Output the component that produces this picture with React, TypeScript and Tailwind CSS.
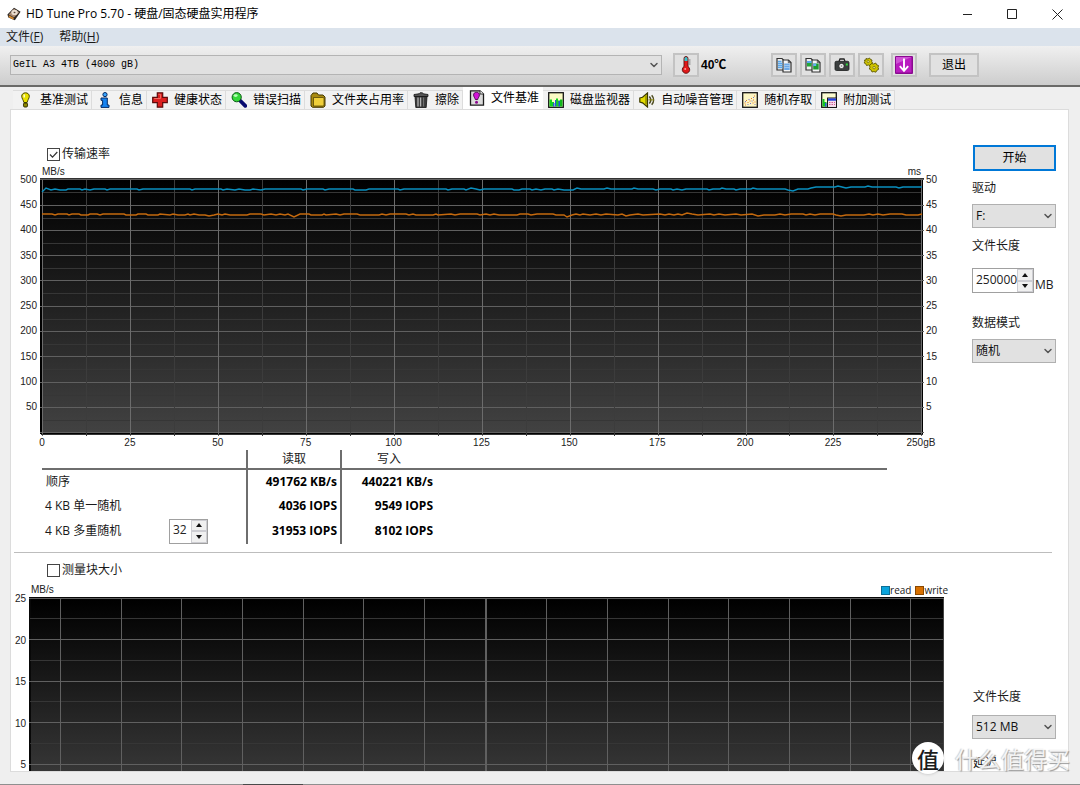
import React, { useState } from "react";
import { ChevronDown } from "lucide-react";

type IconProps = { className?: string };

/* ---------- icons ---------- */

const DriveIcon = () => (
  <svg viewBox="0 0 16 16" className="h-[14px] w-[14px]" aria-hidden="true">
    <path d="M.5 8.500 8 .8 15.500 5.500 9 15 1.500 12Z" fill="#2b2623" />
    <path d="M2 8.500 8 2l6 4-6 6Z" fill="#a98a72" />
    <ellipse cx="8.600" cy="6.200" rx="3.600" ry="3" fill="#e9dccf" />
    <ellipse cx="8.600" cy="6.200" rx="1.100" ry=".9" fill="#5b4638" />
    <path d="m2 9.500 6 3.200-1 1.500-5-2.400Z" fill="#d88a2c" />
  </svg>
);

const BulbIcon = () => (
  <svg viewBox="0 0 16 16" className="h-4 w-4" aria-hidden="true">
    <path d="M7.500.8C5.200.8 3.700 2.400 3.700 4.200c0 2.200 1.800 4 2.200 6.300h3.200c.4-2.300 2.200-4.100 2.200-6.300C11.300 2.400 9.800.8 7.500.8Z" fill="#e8e000" stroke="#4a4800" strokeWidth="1" />
    <path d="M6.200 2.600v3" stroke="#fffde0" strokeWidth="1.400" />
    <rect x="5.500" y="11" width="4" height="4" rx="1.200" fill="#8c8700" stroke="#2e2d00" />
  </svg>
);

const InfoIcon = () => (
  <svg viewBox="0 0 16 16" className="h-4 w-4" aria-hidden="true">
    <circle cx="8" cy="2.600" r="2.100" fill="#38a5ff" stroke="#052a66" strokeWidth="1" />
    <path d="M4 6h6.300v7H12v2.400H4V13h1.600V8.300H4Z" fill="#1784f2" stroke="#052a66" strokeWidth="1" />
  </svg>
);

const CrossIcon = () => (
  <svg viewBox="0 0 16 16" className="h-4 w-4" aria-hidden="true">
    <path d="M5.300.8h5.400v4.500h4.600v5.400h-4.600v4.500H5.300v-4.500H.7V5.300h4.600Z" fill="#dc2020" stroke="#5c0c0c" strokeWidth="1.200" />
    <path d="M6.500 2.300h2v4.200H2.200" fill="none" stroke="#f06a60" strokeWidth="1" />
  </svg>
);

const SearchIcon = () => (
  <svg viewBox="0 0 16 16" className="h-4 w-4" aria-hidden="true">
    <path d="m9 8.500 5.300 5.300" stroke="#080a70" strokeWidth="3.800" strokeLinecap="round" />
    <circle cx="5.700" cy="5.200" r="4.600" fill="#35d83a" stroke="#0e5a18" strokeWidth="1" />
    <ellipse cx="4.600" cy="3.600" rx="2" ry="1.400" fill="#b8ffb8" />
  </svg>
);

const FolderIcon = () => (
  <svg viewBox="0 0 16 16" className="h-4 w-4" aria-hidden="true">
    <path d="M1 3.500 3 1h4l1.500 2H13l2 2v9l-1.500 1.300H2.500L1 14Z" fill="#a88a10" stroke="#463900" strokeWidth="1" />
    <path d="M3.500 5.500H13a1 1 0 0 1 1 1V13a1 1 0 0 1-1 1H3.500Z" fill="#f0cf3a" stroke="#463900" strokeWidth=".7" />
  </svg>
);

const TrashIcon = () => (
  <svg viewBox="0 0 16 16" className="h-4 w-4" aria-hidden="true">
    <path d="M2 4.500h12l-.8 11H2.800Z" fill="#3a3a3a" stroke="#111" strokeWidth=".8" />
    <path d="M5 5.500v9M7.600 5.500v9" stroke="#b5b5b5" strokeWidth="1.300" />
    <path d="M10.600 5.500v9" stroke="#777" strokeWidth="1" />
    <path d="M1 4.500v-2L6 1.800 7 .8h2.500l.8 1 4.700.7v2Z" fill="#555" stroke="#111" strokeWidth=".8" />
  </svg>
);

const FileBenchIcon = () => (
  <svg viewBox="0 0 16 16" className="h-4 w-4" aria-hidden="true">
    <path d="M1.500.8H11L14.500 4v11.200h-13Z" fill="#dcdcdc" stroke="#1c1c1c" strokeWidth="1.300" />
    <path d="M11 .8V4h3.500" fill="#fff" stroke="#1c1c1c" strokeWidth=".9" />
    <path d="M7.500 2.300c-1.900 0-2.900 1.100-2.900 2.700 0 1.700 1.300 2.700 1.700 4.500h2.400c.4-1.800 1.700-2.800 1.700-4.500 0-1.600-1-2.700-2.900-2.700Z" fill="#d414d8" stroke="#4a064c" strokeWidth=".9" />
    <circle cx="7.500" cy="12.200" r="1.500" fill="#8d0c90" />
  </svg>
);

const MonitorIcon = () => (
  <svg viewBox="0 0 16 16" className="h-4 w-4" aria-hidden="true">
    <rect x=".7" y=".7" width="14.600" height="14.600" fill="#fbfbc4" stroke="#161616" strokeWidth="1.300" />
    <path d="M1.500 14.500V7.500H4V10h2v4.500ZM8 14.500V6.500h2v2h2v6Z" fill="#12d41e" />
    <path d="M5 14.500V11h1.500v3.500ZM7 14.500V8h1.200v6.500ZM10.500 14.500V9H12v5.500Z" fill="#2456d8" />
    <path d="M12 14.500V7.500h2.500v7Z" fill="#12b81c" />
  </svg>
);

const SpeakerIcon = () => (
  <svg viewBox="0 0 16 16" className="h-4 w-4" aria-hidden="true">
    <path d="M.8 6 3.500 5.300 8.500 1v14L3.500 10.800.8 10Z" fill="#e3dc00" stroke="#3b3900" strokeWidth="1.200" />
    <path d="M7 3.500v9" stroke="#8c8800" strokeWidth="1.400" />
    <path d="M10.300 4.500c1.700 2 1.700 5 0 7M12.700 3.300c2.500 2.800 2.500 6.600 0 9.400" fill="none" stroke="#4d4b20" strokeWidth="1.500" />
    <path d="M9.500 7.900h5.500" stroke="#8c8800" strokeWidth="1" />
  </svg>
);

const RandomIcon = () => (
  <svg viewBox="0 0 16 16" className="h-4 w-4" aria-hidden="true">
    <rect x=".7" y=".7" width="14.600" height="14.600" fill="#fdf6c4" stroke="#161616" strokeWidth="1.300" />
    <path d="M2.500 11h1M4 8.500h1M5.500 10.500h1M7.500 9h1M9 6.500h1M11 8h1M12 4h1M10.500 11h1M3 13h1M12.500 10h1" stroke="#e0762c" strokeWidth="1.200" />
    <path d="M3 9.500h1M5.500 12.500h1M8 11.500h1M9.500 9h1M11 5.500h1M6.500 7.500h1M12.500 12.500h1" stroke="#7a73c8" strokeWidth="1.100" />
  </svg>
);

const ExtraIcon = () => (
  <svg viewBox="0 0 16 16" className="h-4 w-4" aria-hidden="true">
    <rect x=".7" y=".7" width="14.600" height="14.600" fill="#fbfbd0" stroke="#161616" strokeWidth="1.300" />
    <path d="M1.500 14.500V7h2v3h2v4.500Z" fill="#12c41e" />
    <path d="M4 14.500V11h1.500v3.500Z" fill="#2456d8" />
    <rect x="6.500" y="6" width="9" height="9.500" fill="#f3dcea" stroke="#161616" />
    <rect x="7" y="6.500" width="8" height="2.200" fill="#1c3fe0" />
    <path d="M8 10.500h6M8 12.500h6" stroke="#d05a9a" strokeWidth="1" strokeDasharray="1.500 1" />
  </svg>
);

const ThermometerIcon = () => (
  <svg viewBox="0 0 16 18" className="h-[18px] w-4" aria-hidden="true">
    <path d="M6 2.500a2 2 0 0 1 4 0v8a3.700 3.700 0 1 1-4 0Z" fill="#e01818" stroke="#5a1010" strokeWidth=".9" />
    <path d="M6.500 5V2.500a1.500 1.500 0 0 1 3 0V5Z" fill="#35c6cf" />
    <path d="M10.800 4h1.700M10.800 6h1.700M10.800 8h1.700" stroke="#555" strokeWidth=".8" />
    <circle cx="7.200" cy="13" r="1" fill="#ff9c9c" />
  </svg>
);

const PagesIcon = ({ image }: { image?: boolean }) => (
  <svg viewBox="0 0 16 16" className="h-4 w-4" aria-hidden="true">
    <path d="M1 1.500h5L8 3.500V13H1Z" fill="#eee" stroke="#333" strokeWidth="1.200" />
    <path d="M7 3h5.500L15 5.500V15H7Z" fill="#f4f4f4" stroke="#333" strokeWidth="1.200" />
    <path d="M12.300 3v2.700H15" fill="none" stroke="#333" strokeWidth=".8" />
    {image ? (
      <>
        <rect x="2" y="4" width="4.500" height="5.500" fill="#23a836" />
        <rect x="2" y="4" width="4.500" height="2" fill="#57a6ef" />
        <rect x="8.200" y="6.500" width="5.500" height="6" fill="#1c9c2e" />
        <rect x="8.200" y="6.500" width="3" height="2.500" fill="#62aef2" />
      </>
    ) : (
      <>
        <path d="M2 4.500h3.500M2 6.500h4.500M2 8.500h4.500M2 10.500h4.500" stroke="#5aa7ea" strokeWidth="1.300" />
        <rect x="8.200" y="6.500" width="5.500" height="6.500" fill="#6ba8e6" />
        <path d="M8.200 8.500h5.500M8.200 10.500h5.500" stroke="#b4d5f5" strokeWidth=".7" />
      </>
    )}
  </svg>
);

const CameraIcon = () => (
  <svg viewBox="0 0 16 16" className="h-4 w-4" aria-hidden="true">
    <path d="M5 4.500 6 2h4l1 2.500" fill="#eee" stroke="#222" strokeWidth="1.300" />
    <rect x="1" y="4.300" width="14" height="9.200" rx="1.400" fill="#3b3f3f" stroke="#1b1d1d" strokeWidth=".8" />
    <circle cx="7.500" cy="9" r="2.600" fill="#f2f2f2" stroke="#111" strokeWidth=".6" />
    <circle cx="7.500" cy="9" r=".9" fill="#999" />
    <rect x="11.800" y="6.500" width="2" height="2" fill="#2edb3c" />
  </svg>
);

const GearsIcon = () => (
  <svg viewBox="0 0 16 16" className="h-4 w-4" aria-hidden="true">
    <g fill="#cfc400" stroke="#5d5800" strokeWidth=".9">
      <path d="M3 1.500 5 2l1.500-1 1 1.500 1.500.5-.3 1.600.8 1.400-1.500 1L7 8.500 5.300 8 3.500 8.500l-.7-1.700L1.200 6l.6-1.500L1.500 3l1.500 0Z" />
      <path d="M8.700 6.500 10.700 7l2-1 1 1.800 1.900.8-.6 1.800.7 1.900-1.800 1-1 1.900-2-.7-1.900.5-.7-1.800L6.300 12l.7-1.800-.5-1.800Z" />
    </g>
    <circle cx="5.200" cy="4.600" r="1.100" fill="#eee88a" stroke="#5d5800" strokeWidth=".6" />
    <circle cx="11.100" cy="10.600" r="1.200" fill="#eee88a" stroke="#5d5800" strokeWidth=".6" />
  </svg>
);

const DownIcon = () => (
  <svg viewBox="0 0 18 18" className="h-[18px] w-[18px]" aria-hidden="true">
    <rect width="18" height="18" rx="1" fill="#8a0a90" />
    <rect x="1" y="1" width="15.500" height="15.500" fill="#b91cc0" />
    <path d="M1 1h15.500L1 8Z" fill="#cf52d6" />
    <path d="M9 2.500V14M4.800 10.200 9 14.800l4.200-4.600" fill="none" stroke="#fff" strokeWidth="1.900" />
  </svg>
);

/* ---------- controls ---------- */

function ToolButton({ label, children }: { label: string; children: React.ReactNode }) {
  return (
    <button
      type="button"
      aria-label={label}
      className="flex h-6 w-[26px] items-center justify-center border-2 border-[#c3c3c3] bg-[#e1e1e1]"
    >
      {children}
    </button>
  );
}

function SelectBox({ id, options }: { id: string; options: string[] }) {
  return (
    <div className="relative">
      <select
        id={id}
        className="block h-6 w-full appearance-none border border-[#b0b0b0] bg-[#e1e1e1] pl-[3px] pr-5 text-xs text-[#111]"
      >
        {options.map((o) => (
          <option key={o}>{o}</option>
        ))}
      </select>
      <ChevronDown className="pointer-events-none absolute right-[2px] top-[6px] h-3 w-3 text-[#555]" strokeWidth={3} />
    </div>
  );
}

function Spinner({ id, initial, width }: { id: string; initial: number; width: string }) {
  const [value, setValue] = useState(initial);
  return (
    <div className={`flex h-[25px] border border-[#a0a0a0] bg-white ${width}`}>
      <input
        id={id}
        value={value}
        onChange={(e) => setValue(Number(e.target.value) || 0)}
        className="w-0 flex-1 bg-white pb-[2px] pl-[3px] text-xs text-[#222] outline-none"
      />
      <div className="flex w-4 flex-col gap-[2px] bg-[#cdcdd2] p-px">
        <button type="button" aria-label="+" onClick={() => setValue(value + 1)} className="flex flex-1 items-center justify-center bg-[#f0f0f0]">
          <svg viewBox="0 0 6 4" className="h-1 w-[6px]"><path d="M0 4 3 0l3 4Z" fill="#111" /></svg>
        </button>
        <button type="button" aria-label="-" onClick={() => setValue(value - 1)} className="flex flex-1 items-center justify-center bg-[#f0f0f0]">
          <svg viewBox="0 0 6 4" className="h-1 w-[6px]"><path d="M0 0h6L3 4Z" fill="#111" /></svg>
        </button>
      </div>
    </div>
  );
}

function CheckField({ id, label, checked }: { id: string; label: string; checked: boolean }) {
  const [on, setOn] = useState(checked);
  return (
    <div className="flex h-[14px] items-center gap-[2px] pl-9">
      <div className="relative h-[13px] w-[13px]">
        <input
          id={id}
          type="checkbox"
          checked={on}
          onChange={() => setOn(!on)}
          className="block h-[13px] w-[13px] appearance-none border border-[#444] bg-white"
        />
        {on && (
          <svg viewBox="0 0 13 13" className="pointer-events-none absolute inset-0 h-[13px] w-[13px]">
            <path d="m3 6.500 2.500 2.700L10.300 4" fill="none" stroke="#333" strokeWidth="1.200" />
          </svg>
        )}
      </div>
      <label htmlFor={id} className="leading-[14px]">{label}</label>
    </div>
  );
}

/* ---------- charts ---------- */

const READ: number[][] = [
  [2, 3], [6, -1], [11, 1], [15, 0], [20, 1], [26, 1], [28, 0], [40, 0], [42, 1], [45, 0], [50, 1], [54, 0], [65, 0], [67, 1], [70, 0],
  [97, 0], [99, 1], [103, 0], [150, 0], [152, 1], [155, 0], [181, 0], [183, 1], [187, 0], [195, 1], [199, 0], [205, 1], [210, 1], [213, 0],
  [221, 1], [225, 0], [261, 0], [263, 1], [267, 0], [283, 0], [285, 1], [289, 0], [313, 0], [315, 1], [326, 1], [329, 0], [358, 0],
  [360, 1], [364, 0], [406, 0], [408, 1], [412, 0], [424, 0], [426, 1], [431, -1], [436, 0], [440, 1], [444, 0], [472, 0], [474, 1],
  [479, 1], [482, 0], [490, 0], [492, 1], [496, 0], [501, 1], [505, 0], [512, 0], [514, 1], [518, 0], [524, 1], [533, 1], [537, -1],
  [541, 0], [564, 0], [567, -1], [571, 0], [592, 0], [594, -1], [598, 0], [613, 0], [616, 1], [620, 0], [631, 0], [633, 1], [637, 0],
  [642, 1], [646, 0], [667, 0], [669, 1], [673, 0], [680, 0], [682, -1], [686, 0], [694, 0], [696, 1], [700, 0], [711, 0], [713, -1],
  [717, 0], [745, 0], [748, 1], [753, 2], [758, 0], [768, 0], [771, -1], [776, -2], [795, -2], [798, -3], [802, -2], [806, -1],
  [811, -2], [825, -2], [828, -3], [832, -2], [856, -2], [859, -1], [863, -2], [882, -2],
];

const WRITE: number[][] = [
  [2, 0], [12, 0], [15, 1], [18, 0], [27, 0], [29, 1], [32, 0], [39, 0], [41, 1], [48, 1], [50, 0], [57, 0], [60, 1], [63, 0], [84, 0],
  [86, 1], [96, 1], [98, 0], [106, 0], [108, 1], [118, 1], [120, 0], [130, 1], [133, 0], [138, 1], [145, 1], [148, 0], [150, 1], [154, 0],
  [159, 1], [165, 1], [169, 2], [174, 1], [178, 0], [182, 1], [185, 0], [190, 1], [207, 1], [210, 0], [221, 0], [224, 1], [231, 0],
  [236, 1], [240, 0], [245, 1], [248, 0], [254, 3], [260, 0], [269, 0], [271, 1], [282, 1], [284, 0], [286, 1], [296, 0], [300, 1],
  [304, 0], [317, 0], [320, 1], [339, 1], [342, 0], [346, 1], [350, 0], [366, 0], [369, 1], [373, 0], [376, 1], [393, 1], [396, 0],
  [398, 1], [411, 0], [415, 1], [420, 0], [437, 0], [440, 1], [446, 0], [450, 1], [454, 0], [459, 1], [477, 1], [480, 0], [488, 0],
  [491, 1], [497, 0], [513, 0], [516, 1], [524, 1], [527, 3], [532, 1], [536, 0], [540, 1], [543, 0], [550, 1], [556, 0], [561, 1],
  [566, 0], [578, 1], [582, 0], [586, 2], [590, 1], [598, 0], [603, 1], [620, 0], [625, 1], [629, 0], [634, 1], [638, 0], [642, 1],
  [647, -1], [652, 0], [658, 1], [670, 0], [674, 1], [679, 0], [685, 1], [696, 0], [701, 1], [712, 0], [718, 2], [724, 1], [735, 1],
  [740, 0], [745, 1], [751, 0], [763, 0], [766, 1], [770, 0], [775, 1], [780, 0], [793, 0], [796, 1], [801, 2], [806, 1], [824, 1],
  [829, 0], [833, 1], [838, 0], [843, 1], [850, 0], [862, 0], [866, 1], [878, 1], [882, 0],
];

const toPoints = (series: number[][], base: number) => series.map(([x, d]) => `${x},${base + d}`).join(" ");
const range = (n: number) => Array.from({ length: n }, (_, i) => i);

function TransferChart() {
  return (
    <svg viewBox="0 0 884 258" preserveAspectRatio="none" className="block h-[258px] w-full" shapeRendering="crispEdges" aria-hidden="true">
      <defs>
        <linearGradient id="transferPlot" x1="0" y1="0" x2="0" y2="1">
          <stop offset="0" stopColor="#000" />
          <stop offset="1" stopColor="#424242" />
        </linearGradient>
      </defs>
      <rect x="0" y="0" width="883" height="256" fill="#000" />
      <rect x="3" y="2" width="879" height="253" fill="url(#transferPlot)" />
      <path d="M0 .5H884" stroke="#333" />
      {range(10).map((i) => (
        <path key={i} d={`M2 ${Math.round(14.2 + 25.3 * i) + 0.5}H882`} stroke="#363636" />
      ))}
      {range(11).map((i) => (
        <path key={i} d={`M0 ${Math.floor(1.7 + 25.3 * i) + 0.5}H884`} stroke="#606060" />
      ))}
      {range(21).map((i) => (
        <path key={i} d={`M${Math.floor(2.5 + 43.97 * i) + 0.5} 2V258`} stroke={i % 2 ? "#3c3c3c" : "#6c6c6c"} />
      ))}
      <path d="M1 256.500H883" stroke="#333" />
      <g fill="none" strokeWidth="1.400" shapeRendering="auto">
        <polyline points={toPoints(READ, 11)} stroke="#0a8fbe" />
        <polyline points={toPoints(WRITE, 36)} stroke="#c4690e" />
      </g>
    </svg>
  );
}

function BlockChart() {
  return (
    <svg viewBox="0 0 914 174" preserveAspectRatio="none" className="block h-[174px] w-full" shapeRendering="crispEdges" aria-hidden="true">
      <defs>
        <linearGradient id="blockPlot" x1="0" y1="0" x2="0" y2="1">
          <stop offset="0" stopColor="#000" />
          <stop offset="1" stopColor="#363636" />
        </linearGradient>
      </defs>
      <rect width="914" height="174" fill="#080808" />
      <rect x="2" y="2" width="911" height="172" fill="url(#blockPlot)" />
      {range(4).map((i) => (
        <path key={i} d={`M1 ${Math.floor(21.5 + 41.5 * i) + 0.5}H914`} stroke="#363636" />
      ))}
      {range(5).map((i) => (
        <path key={i} d={`M0 ${Math.floor(1 + 41.5 * i) + 0.5}H914`} stroke="#606060" />
      ))}
      {range(15).map((i) => (
        <path key={i} d={`M${Math.floor(31.5 + 60.67 * i) + 0.5} 2V174`} stroke="#606060" />
      ))}
      <path d="M913.500 2V174" stroke="#444" />
    </svg>
  );
}

/* ---------- page ---------- */

const TABS: { label: string; Icon: React.FC<IconProps>; active?: boolean }[] = [
  { label: "基准测试", Icon: BulbIcon },
  { label: "信息", Icon: InfoIcon },
  { label: "健康状态", Icon: CrossIcon },
  { label: "错误扫描", Icon: SearchIcon },
  { label: "文件夹占用率", Icon: FolderIcon },
  { label: "擦除", Icon: TrashIcon },
  { label: "文件基准", Icon: FileBenchIcon, active: true },
  { label: "磁盘监视器", Icon: MonitorIcon },
  { label: "自动噪音管理", Icon: SpeakerIcon },
  { label: "随机存取", Icon: RandomIcon },
  { label: "附加测试", Icon: ExtraIcon },
];

const RATES = [500, 450, 400, 350, 300, 250, 200, 150, 100, 50];
const DELAYS = [50, 45, 40, 35, 30, 25, 20, 15, 10, 5];
const SIZES = ["0", "25", "50", "75", "100", "125", "150", "175", "200", "225", "250gB"];
const BLOCK_RATES = [25, 20, 15, 10, 5];

const CHART_TEXT = "font-['Liberation_Sans',sans-serif] text-[10px] leading-3 text-[#222]";

export default function App() {
  return (
    <div className="flex min-h-screen flex-col bg-[#efefef] font-['Open_Sans','Noto_Sans_CJK_SC',sans-serif] text-xs text-[#1a1a1a]">
      <header className="flex h-7 items-center bg-white pl-[7px]">
        <DriveIcon />
        <h1 className="flex-1 pl-[5px] text-xs leading-4 text-black">HD Tune Pro 5.70 - 硬盘/固态硬盘实用程序</h1>
        <button type="button" aria-label="最小化" className="flex h-7 w-[45px] items-center justify-center">
          <svg viewBox="0 0 11 11" className="h-[11px] w-[11px]"><path d="M1 5.500h9" stroke="#222" /></svg>
        </button>
        <button type="button" aria-label="最大化" className="flex h-7 w-[45px] items-center justify-center">
          <svg viewBox="0 0 11 11" className="h-[11px] w-[11px]"><path d="M.5.500h9v9h-9Z" fill="none" stroke="#222" /></svg>
        </button>
        <button type="button" aria-label="关闭" className="flex h-7 w-[45px] items-center justify-center">
          <svg viewBox="0 0 11 11" className="h-[11px] w-[11px]"><path d="m.5.500 10 10M10.500.500l-10 10" stroke="#222" /></svg>
        </button>
      </header>

      <nav className="flex h-[18px] items-center gap-4 bg-[#dbe3ec] pl-[6px]">
        <button type="button" className="leading-4">文件(<u>F</u>)</button>
        <button type="button" className="leading-4">帮助(<u>H</u>)</button>
      </nav>

      <div className="flex h-[41px] items-center border-b-2 border-[#6a6a68] bg-linear-to-b from-[#f0f0f0] to-[#cdcdcd] pb-[2px] pl-[10px] pr-[101px]">
        <div className="relative flex-1">
          <label htmlFor="device" className="sr-only">硬盘</label>
          <select
            id="device"
            className="block h-5 w-full appearance-none border border-[#b4b4b4] bg-[#e1e1e1] pl-[2px] font-['Liberation_Mono',monospace] text-[10px] leading-[18px] text-black"
          >
            <option>GeIL A3 4TB (4000 gB)</option>
          </select>
          <ChevronDown className="pointer-events-none absolute right-[2px] top-1 h-3 w-3 text-[#555]" strokeWidth={3} />
        </div>
        <div className="flex items-center pl-[11px]">
          <ToolButton label="温度"><ThermometerIcon /></ToolButton>
          <output className="w-[72px] pl-[2px] font-['Liberation_Sans','Noto_Sans_CJK_SC',sans-serif] font-bold leading-4 text-black">40℃</output>
          <div className="flex gap-[3px]">
            <ToolButton label="复制文本"><PagesIcon /></ToolButton>
            <ToolButton label="复制图像"><PagesIcon image /></ToolButton>
            <ToolButton label="截图"><CameraIcon /></ToolButton>
            <ToolButton label="选项"><GearsIcon /></ToolButton>
          </div>
          <div className="flex gap-3 pl-[7px]">
            <ToolButton label="保存"><DownIcon /></ToolButton>
            <button type="button" className="h-6 w-[50px] border-2 border-[#c3c3c3] bg-[#e1e1e1] leading-4 text-black">退出</button>
          </div>
        </div>
      </div>

      <main className="flex flex-1 flex-col pl-[10px] pr-[11px]">
        <div role="tablist" className="flex h-[22px] items-end pl-[3px]">
          {TABS.map(({ label, Icon, active }) => (
            <button
              key={label}
              type="button"
              role="tab"
              aria-selected={!!active}
              className={
                active
                  ? "flex h-[22px] items-center gap-[6px] bg-white pl-[6px] pr-1 leading-4 text-black"
                  : "flex h-[19px] items-center gap-[6px] border-r border-t border-[#dcdcdc] bg-[#f2f2f2] pl-[5px] pr-[3px] leading-4 text-black"
              }
            >
              <Icon />
              {label}
            </button>
          ))}
        </div>

        <div className="border border-[#dcdcdc] bg-white">
          <section className="flex">
            <div className="min-w-0 flex-1 pt-[37px]">
              <CheckField id="transfer" label="传输速率" checked />
              <div className={`flex justify-between pl-[31px] pr-[51px] pt-[5px] ${CHART_TEXT}`}>
                <span>MB/s</span>
                <span>ms</span>
              </div>
              <div className="flex">
                <div className={`-mt-1 flex h-[239px] w-[29px] flex-col justify-between pr-[3px] text-right ${CHART_TEXT}`}>
                  {RATES.map((v) => <span key={v}>{v}</span>)}
                </div>
                <div className="min-w-0 flex-1">
                  <TransferChart />
                  <div className={`flex justify-between pl-[2px] pr-[3px] pt-px ${CHART_TEXT}`}>
                    {SIZES.map((v) => <span key={v} className="flex w-0 justify-center">{v}</span>)}
                  </div>
                </div>
                <div className={`-mt-1 flex h-[239px] w-12 flex-col justify-between pl-[2px] ${CHART_TEXT}`}>
                  {DELAYS.map((v) => <span key={v}>{v}</span>)}
                </div>
              </div>
              <div className="pb-2 pl-[31px] pr-[85px] pt-px">
                <table className="w-full table-fixed border-separate border-spacing-0">
                  <thead>
                    <tr className="h-5">
                      <th className="w-[206px] border-b-2 border-r-2 border-[#6e6e6e] p-0" />
                      <th scope="col" className="w-[94px] border-b-2 border-r-2 border-[#6e6e6e] p-0 text-center font-normal leading-4">读取</th>
                      <th scope="col" className="w-[94px] border-b-2 border-[#6e6e6e] p-0 text-center font-normal leading-4">写入</th>
                      <th className="border-b-2 border-[#6e6e6e] p-0" />
                    </tr>
                  </thead>
                  <tbody>
                    <tr className="h-6">
                      <th scope="row" className="border-r-2 border-[#6e6e6e] p-0 pl-1 text-left font-normal leading-4">顺序</th>
                      <td className="border-r-2 border-[#6e6e6e] p-0 pr-[3px] text-right font-bold leading-4 text-black">491762 KB/s</td>
                      <td className="p-0 pr-[3px] text-right font-bold leading-4 text-black">440221 KB/s</td>
                      <td />
                    </tr>
                    <tr className="h-6">
                      <th scope="row" className="border-r-2 border-[#6e6e6e] p-0 pl-[3px] text-left font-normal leading-4">4 KB 单一随机</th>
                      <td className="border-r-2 border-[#6e6e6e] p-0 pr-[3px] text-right font-bold leading-4 text-black">4036 IOPS</td>
                      <td className="p-0 pr-[3px] text-right font-bold leading-4 text-black">9549 IOPS</td>
                      <td />
                    </tr>
                    <tr className="h-[26px]">
                      <th scope="row" className="border-r-2 border-[#6e6e6e] p-0 pl-[3px] text-left font-normal leading-4">
                        <div className="flex items-center justify-between pr-[38px]">
                          <label htmlFor="queue">4 KB 多重随机</label>
                          <Spinner id="queue" initial={32} width="w-[39px]" />
                        </div>
                      </th>
                      <td className="border-r-2 border-[#6e6e6e] p-0 pr-[3px] text-right font-bold leading-4 text-black">31953 IOPS</td>
                      <td className="p-0 pr-[3px] text-right font-bold leading-4 text-black">8102 IOPS</td>
                      <td />
                    </tr>
                  </tbody>
                </table>
              </div>
            </div>

            <aside className="flex w-24 flex-col pr-3 pt-[35px]">
              <button type="button" className="ml-px h-[26px] border-2 border-[#0078d7] bg-[#e1e1e1] leading-4 text-black">开始</button>
              <label htmlFor="drive" className="pt-[9px] leading-4">驱动</label>
              <div className="pt-2"><SelectBox id="drive" options={["F:"]} /></div>
              <label htmlFor="length" className="pt-[10px] leading-4">文件长度</label>
              <div className="flex items-end gap-px pt-[14px]">
                <Spinner id="length" initial={250000} width="w-[62px]" />
                <span className="leading-4">MB</span>
              </div>
              <label htmlFor="mode" className="pt-[22px] leading-4">数据模式</label>
              <div className="pt-2"><SelectBox id="mode" options={["随机"]} /></div>
            </aside>
          </section>

          <hr className="ml-[3px] mr-4 border-[#bdbdbd]" />

          <section className="flex">
            <div className="min-w-0 flex-1 pt-[10px]">
              <CheckField id="blockSize" label="测量块大小" checked={false} />
              <div className="flex items-center justify-between pl-5 pr-6 pt-[7px]">
                <span className={CHART_TEXT}>MB/s</span>
                <div className="flex gap-1 text-[10px] leading-3">
                  <span className="flex items-center"><i className="h-[9px] w-[9px] border border-[#0d6f96] bg-[#0aa4dc]" />read</span>
                  <span className="flex items-center"><i className="h-[9px] w-[9px] border border-[#8a4800] bg-[#d87000]" />write</span>
                </div>
              </div>
              <div className="flex pt-px">
                <div className={`-mt-1 flex h-[178px] w-[18px] flex-col justify-between pr-[3px] text-right ${CHART_TEXT}`}>
                  {BLOCK_RATES.map((v) => <span key={v}>{v}</span>)}
                </div>
                <div className="min-w-0 flex-1"><BlockChart /></div>
                <div className="w-7" />
              </div>
            </div>

            <aside className="flex w-24 flex-col justify-end pr-3">
              <label htmlFor="blockLength" className="pl-px leading-4">文件长度</label>
              <div className="pt-[10px]"><SelectBox id="blockLength" options={["512 MB"]} /></div>
              <span className="pl-px pt-4 leading-4">延迟</span>
            </aside>
          </section>
        </div>
      </main>

      <footer className="flex h-px bg-[#8f8f8f] pl-[243px]">
        <span className="w-[60px] bg-[#4a4a4a]" />
      </footer>

      <div className="pointer-events-none absolute right-[10px] top-[742px] flex items-center gap-[11px]">
        <span className="flex h-8 w-8 items-center justify-center rounded-full bg-white font-['Noto_Sans_CJK_SC',sans-serif] text-[22px] font-medium leading-8 text-[#1c1c1c] shadow-sm">值</span>
        <span className="font-['Noto_Sans_CJK_SC',sans-serif] text-[23px] leading-8 text-white/80 [text-shadow:1px_1px_1px_#999,-1px_0_1px_#ccc]">什么值得买</span>
      </div>
    </div>
  );
}
